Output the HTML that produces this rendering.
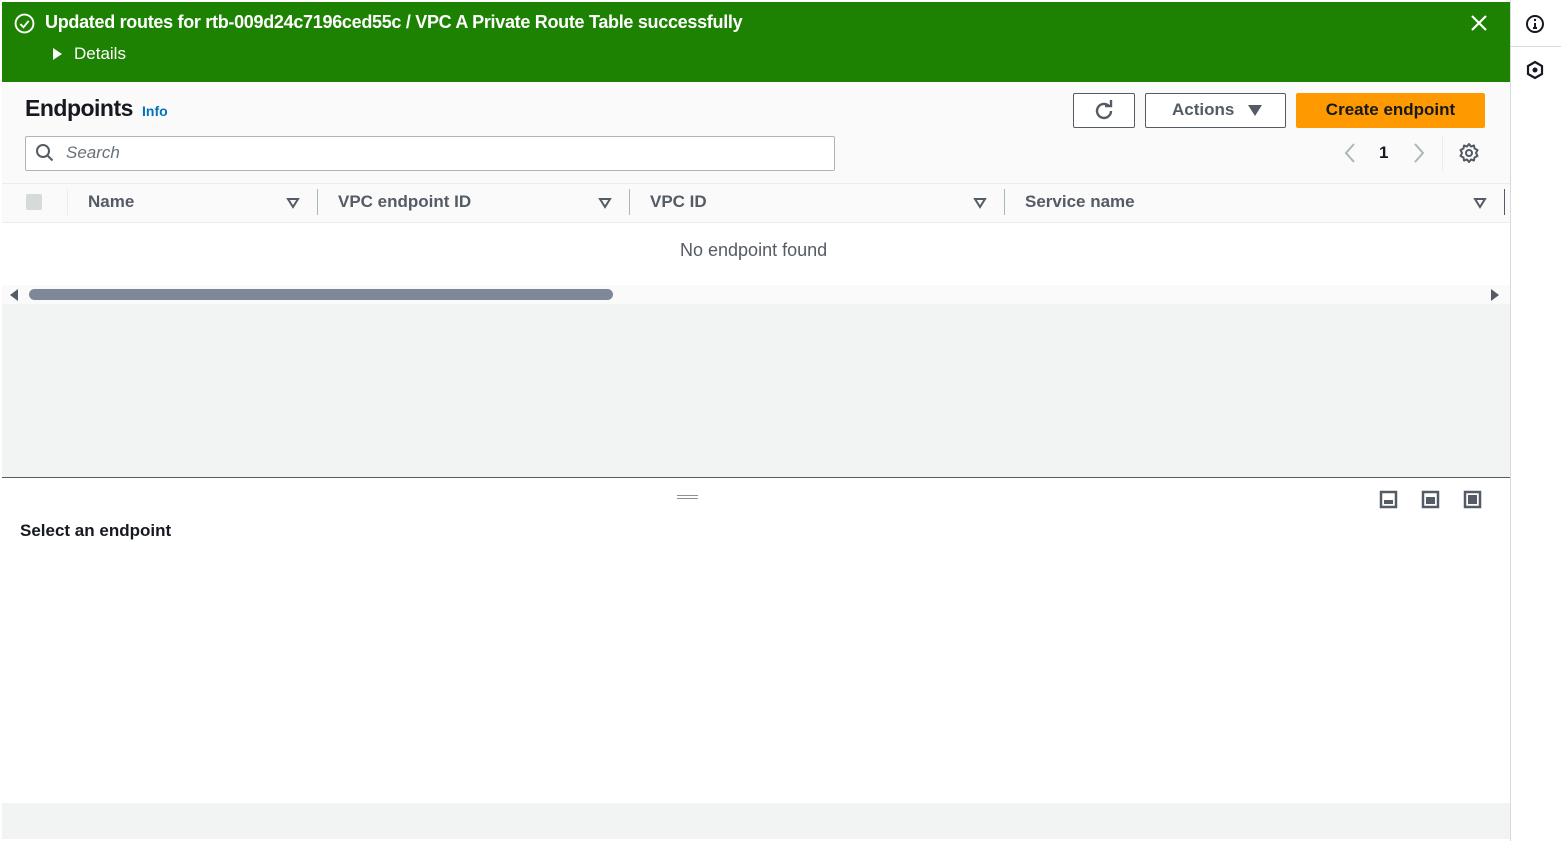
<!DOCTYPE html><html><head><style>
body{margin:0;width:1561px;height:841px;overflow:hidden;background:#fff;font-family:"Liberation Sans",sans-serif;position:relative;color:#16191f}
.a{position:absolute}
.b{font-weight:bold}
</style></head><body>
<div class="a" style="left:2px;top:2px;width:1508px;height:837px;background:#f2f3f3"></div>
<div class="a" style="top:2px;left:2px;width:1508px;height:80px;background:#1d8102"></div>
<svg class="a" style="left:14px;top:13px" width="21" height="21" viewBox="0 0 20 20"><circle cx="10" cy="10" r="8.5" fill="none" stroke="#fff" stroke-width="1.8"/><path d="M6 10.5l3 3 5-6" fill="none" stroke="#fff" stroke-width="1.8"/></svg>
<div class="a b" style="left:45px;top:12px;font-size:18px;color:#fff;letter-spacing:-0.3px">Updated routes for rtb-009d24c7196ced55c / VPC A Private Route Table successfully</div>
<svg class="a" style="left:52px;top:47px" width="11" height="14"><path d="M1 1l9 6-9 6z" fill="#fff"/></svg>
<div class="a" style="left:74px;top:44px;font-size:17px;color:#fff">Details</div>
<svg class="a" style="left:1470px;top:14px" width="18" height="18"><path d="M2 2l14 14M16 2L2 16" stroke="#fff" stroke-width="2.2"/></svg>
<div class="a" style="left:1510px;top:0;width:1px;height:841px;background:#d5dbdb"></div>
<div class="a" style="left:1511px;top:46px;width:50px;height:1px;background:#d5dbdb"></div>
<svg class="a" style="left:1525px;top:14px" width="20" height="20"><circle cx="10" cy="10" r="8" fill="none" stroke="#16191f" stroke-width="2"/><path d="M10 9v5M8 14h4" stroke="#16191f" stroke-width="2"/><circle cx="10" cy="6" r="1.2" fill="#16191f"/></svg>
<svg class="a" style="left:1525px;top:60px" width="20" height="20"><path d="M10 2l7 4v8l-7 4-7-4V6z" fill="none" stroke="#16191f" stroke-width="2.2"/><circle cx="10" cy="10" r="2.5" fill="#16191f"/></svg>
<div class="a" style="left:2px;top:82px;width:1508px;height:140px;background:#fafafa"></div>
<div class="a b" style="left:25px;top:95px;font-size:23px;letter-spacing:-0.5px">Endpoints</div>
<div class="a b" style="left:142px;top:103px;font-size:14px;color:#0073bb">Info</div>
<div class="a" style="left:1073px;top:93px;width:60px;height:33px;border:1px solid #545b64;border-radius:2px;background:#fff"></div>
<svg class="a" style="left:1093px;top:100px" width="22" height="22" viewBox="0 0 22 22"><path d="M18 11a7 7 0 1 1-2.5-5.4" fill="none" stroke="#545b64" stroke-width="2.4"/><path d="M12 5h6V-1" fill="none" stroke="#545b64" stroke-width="2.4" transform="translate(0,1)"/></svg>
<div class="a" style="left:1145px;top:93px;width:139px;height:33px;border:1px solid #545b64;border-radius:2px;background:#fff"></div>
<div class="a b" style="left:1172px;top:100px;font-size:17px;color:#545b64">Actions</div>
<svg class="a" style="left:1248px;top:105px" width="14" height="11"><path d="M0 0h14L7 11z" fill="#545b64"/></svg>
<div class="a b" style="left:1296px;top:93px;width:189px;height:35px;background:#ff9900;border-radius:2px;font-size:17px;text-align:center;line-height:34px">Create endpoint</div>
<div class="a" style="left:25px;top:136px;width:808px;height:33px;border:1px solid #aab7b8;background:#fff;border-radius:2px"></div>
<svg class="a" style="left:35px;top:143px" width="20" height="20"><circle cx="8" cy="8" r="6" fill="none" stroke="#545b64" stroke-width="2"/><path d="M12.5 12.5l5 5" stroke="#545b64" stroke-width="2"/></svg>
<div class="a" style="left:66px;top:143px;font-size:17px;font-style:italic;color:#687078">Search</div>
<svg class="a" style="left:1343px;top:142px" width="14" height="22"><path d="M11 2L3 11l8 9" fill="none" stroke="#aab7b8" stroke-width="2"/></svg>
<div class="a b" style="left:1379px;top:143px;font-size:17px">1</div>
<svg class="a" style="left:1412px;top:142px" width="14" height="22"><path d="M3 2l8 9-8 9" fill="none" stroke="#aab7b8" stroke-width="2"/></svg>
<div class="a" style="left:1442px;top:136px;width:1px;height:35px;background:#eaeded"></div>
<svg class="a" style="left:1457px;top:141px" width="24" height="24" viewBox="0 0 24 24"><circle cx="12" cy="12" r="3" fill="none" stroke="#545b64" stroke-width="2"/><path d="M12 3l2 2.5 3-1 .5 3 3 1.5-1.5 3 1.5 3-3 1.5-.5 3-3-1-2 2.5-2-2.5-3 1-.5-3-3-1.5 1.5-3-1.5-3 3-1.5.5-3 3 1z" fill="none" stroke="#545b64" stroke-width="2" stroke-linejoin="round"/></svg>
<div class="a" style="left:2px;top:183px;width:1508px;height:1px;background:#eaeded"></div>
<div class="a" style="left:2px;top:222px;width:1508px;height:1px;background:#eaeded"></div>
<div class="a" style="left:26px;top:194px;width:16px;height:16px;background:#d5dbdb;border-radius:2px"></div>
<div class="a" style="left:67px;top:189px;width:1px;height:26px;background:#eaeded"></div>
<div class="a b" style="left:88px;top:192px;font-size:17px;color:#545b64">Name</div>
<div class="a b" style="left:338px;top:192px;font-size:17px;color:#545b64">VPC endpoint ID</div>
<div class="a b" style="left:650px;top:192px;font-size:17px;color:#545b64">VPC ID</div>
<div class="a b" style="left:1025px;top:192px;font-size:17px;color:#545b64">Service name</div>
<svg class="a" style="left:286px;top:197px" width="14" height="12"><path d="M2 2h10L7 10z" fill="none" stroke="#545b64" stroke-width="2"/></svg>
<svg class="a" style="left:598px;top:197px" width="14" height="12"><path d="M2 2h10L7 10z" fill="none" stroke="#545b64" stroke-width="2"/></svg>
<svg class="a" style="left:973px;top:197px" width="14" height="12"><path d="M2 2h10L7 10z" fill="none" stroke="#545b64" stroke-width="2"/></svg>
<svg class="a" style="left:1473px;top:197px" width="14" height="12"><path d="M2 2h10L7 10z" fill="none" stroke="#545b64" stroke-width="2"/></svg>
<div class="a" style="left:317px;top:189px;width:1px;height:26px;background:#aab7b8"></div>
<div class="a" style="left:629px;top:189px;width:1px;height:26px;background:#aab7b8"></div>
<div class="a" style="left:1004px;top:189px;width:1px;height:26px;background:#aab7b8"></div>
<div class="a" style="left:1504px;top:189px;width:1px;height:26px;background:#545b64"></div>
<div class="a" style="left:2px;top:223px;width:1508px;height:81px;background:#fff"></div>
<div class="a" style="left:680px;top:240px;font-size:18px;color:#545b64">No endpoint found</div>
<div class="a" style="left:2px;top:285px;width:1508px;height:19px;background:#fafafa"></div>
<svg class="a" style="left:9px;top:289px" width="10" height="12"><path d="M9 0v12L1 6z" fill="#545b64"/></svg>
<svg class="a" style="left:1490px;top:289px" width="10" height="12"><path d="M1 0v12l8-6z" fill="#545b64"/></svg>
<div class="a" style="left:29px;top:289px;width:584px;height:11px;background:#7d8998;border-radius:6px"></div>
<div class="a" style="left:2px;top:477px;width:1508px;height:325px;background:#fff;border-top:1px solid #545b64"></div>
<div class="a" style="left:677px;top:495px;width:21px;height:2px;border-top:1px solid #879596;border-bottom:1px solid #879596"></div>
<div class="a b" style="left:20px;top:521px;font-size:17px">Select an endpoint</div>
<svg class="a" style="left:1379px;top:490px" width="20" height="20"><rect x="2" y="2" width="15" height="15" fill="none" stroke="#545b64" stroke-width="2.5"/><rect x="5" y="10" width="9" height="4" fill="#545b64"/></svg>
<svg class="a" style="left:1421px;top:490px" width="20" height="20"><rect x="2" y="2" width="15" height="15" fill="none" stroke="#545b64" stroke-width="2.5"/><rect x="5" y="7" width="9" height="7" fill="#545b64"/></svg>
<svg class="a" style="left:1463px;top:490px" width="20" height="20"><rect x="2" y="2" width="15" height="15" fill="none" stroke="#545b64" stroke-width="2.5"/><rect x="5" y="5" width="9" height="9" fill="#545b64"/></svg>
</body></html>
